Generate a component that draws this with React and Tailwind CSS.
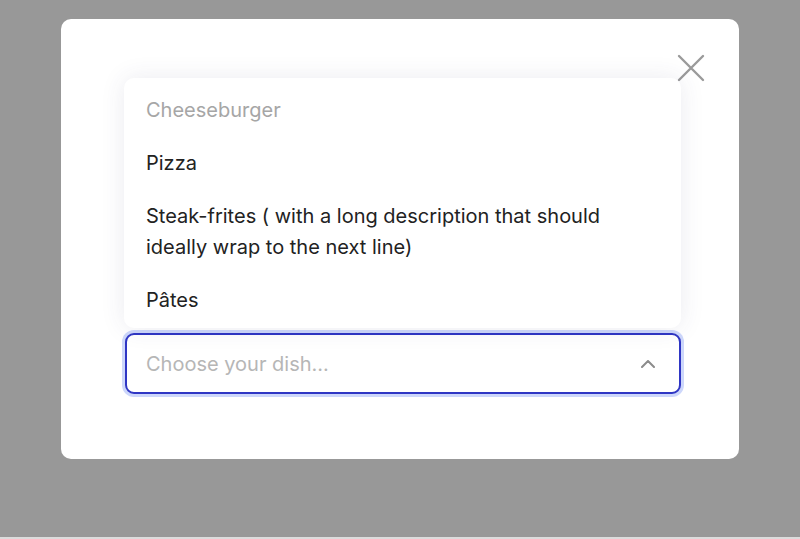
import React from 'react';

const dishes = [
  { label: 'Cheeseburger', muted: true },
  { label: 'Pizza' },
  { label: 'Steak-frites ( with a long description that should ideally wrap to the next line)' },
  { label: 'Pâtes' },
];

const App = () => {
  return (
    <div className="flex h-[539px] w-full flex-col bg-[#dcdcdc] font-['Inter',_'Noto_Sans',_sans-serif]">
      <div className="flex h-[537px] items-start justify-center bg-[#989898] pt-[19px]">
        <div className="relative flex h-[440px] w-[678px] flex-col rounded-[10px] bg-white">
          <button className="absolute right-[34px] top-[35px] text-[#9a9a9a]" aria-label="Close">
            <svg width="28" height="28" viewBox="0 0 28 28" fill="none" stroke="currentColor" strokeWidth="2.4" strokeLinecap="round">
              <path d="M2 2 L26 26 M26 2 L2 26" />
            </svg>
          </button>

          <div className="relative ml-[64px] mt-[314px] w-[556px]">
            <ul className="absolute bottom-full left-[-1px] right-0 mb-[5px] rounded-[10px] bg-white pb-[1px] pt-[6px] shadow-[0_0_24px_rgba(60,60,110,0.10)]">
              {dishes.map((dish) => (
                <li
                  key={dish.label}
                  className={`py-[11px] pl-[22px] pr-[60px] text-[20px] leading-[31px] ${dish.muted ? 'text-[#a6a6a6]' : 'text-[#222222]'}`}
                >
                  {dish.label}
                </li>
              ))}
            </ul>

            <div className="flex h-[61px] items-center justify-between rounded-[9px] border-2 border-[#2f36c4] bg-white pl-[19px] pr-[24px] shadow-[0_0_0_3px_#cdd7fb]">
              <span className="text-[20px] text-[#b6b6b6]">Choose your dish...</span>
              <svg width="14" height="8" viewBox="0 0 14 8" fill="none" stroke="#8c8c8c" strokeWidth="2" strokeLinecap="round" strokeLinejoin="round">
                <path d="M1 7 L7 1 L13 7" />
              </svg>
            </div>
          </div>
        </div>
      </div>
    </div>
  );
};

export default App;
